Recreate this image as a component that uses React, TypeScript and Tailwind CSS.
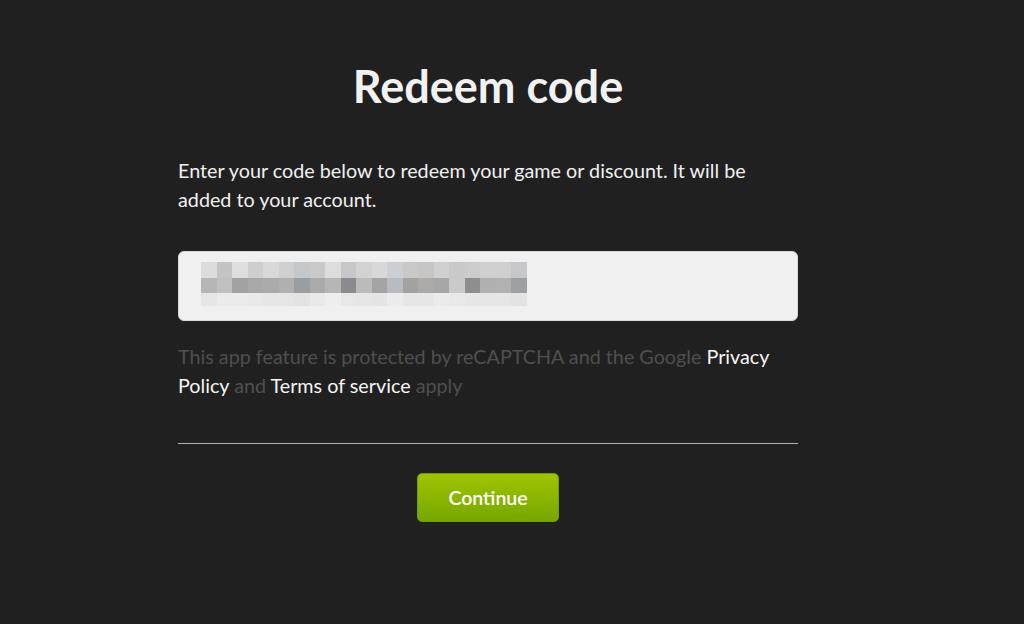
import React from "react"

// blurred-out code inside the input, as in the screenshot
const mosaic = [
  ["#dcdcdc", "#c4c4c4", "#dedede", "#cfcfcf", "#d9d9d9", "#d0d0d0", "#c5c8ca", "#cacaca", "#dddddd", "#c6c8c8", "#d2d2d2", "#d8d8d8", "#cdd0d3", "#c9c9c9", "#c8c6c4", "#d0d0d0", "#c9c9c9", "#cccccc", "#d0d0d0", "#d0d0d0", "#c5c7c9"],
  ["#b6b6b6", "#c0c0c0", "#a2a2a2", "#a6a8aa", "#ababab", "#b0b0b0", "#9a9ea3", "#aaaaaa", "#b8b6b4", "#8a8b8e", "#bbbbbb", "#a5a4a2", "#b8bcc0", "#a2a2a2", "#acaaa9", "#a5a7a8", "#cacaca", "#8e8e8e", "#b0b0b0", "#b3b2b0", "#9ea1a4"],
  ["#e6e6e6", "#ebebeb", "#ebebeb", "#e9e9e9", "#e6e6e6", "#e6e6e6", "#e3e3e3", "#e9e9e9", "#eeeeee", "#e7e7e7", "#e6e6e6", "#e5e5e5", "#ececec", "#e6e6e6", "#e6e6e6", "#ebebeb", "#e9e9e9", "#e6e6e6", "#e6e6e6", "#e6e6e6", "#e3e3e3"],
]

export default function App() {
  return (
    <div className="min-h-[624px] w-full bg-[#202020] font-['Lato','Open_Sans',sans-serif] flex justify-center pr-[48px]">
      <div className="w-[620px] pt-[58px] flex flex-col">
        <h1 className="text-center text-[45px] leading-[56px] font-bold text-[#f2f2f2]">Redeem code</h1>

        <p className="mt-[42px] text-[19.75px] leading-[29px] text-[#f0f0f0]">
          Enter your code below to redeem your game or discount. It will be added to your account.
        </p>

        <div className="mt-[37px] h-[70px] rounded-[6px] bg-[#f0f0f0] border border-[#d8d8d8] pl-[22px] pt-[10px]">
          <div className="flex flex-col">
            {mosaic.map((row, i) => (
              <div key={i} className={i === 2 ? "flex h-[13px]" : i === 0 ? "flex h-[16px]" : "flex h-[15px]"}>
                {row.map((c, j) => (
                  <div key={j} className="w-[15.5px] h-full" style={{ background: c }} />
                ))}
              </div>
            ))}
          </div>
        </div>

        <p className="mt-[21px] text-[19.75px] leading-[29px] text-[#4f4f4f]">
          This app feature is protected by reCAPTCHA and the Google{" "}
          <a className="text-[#f5f5f5]">Privacy Policy</a> and{" "}
          <a className="text-[#f5f5f5]">Terms of service</a> apply
        </p>

        <div className="mt-[43px] h-px bg-[#b0b0b0]" />

        <div className="mt-[29px] flex justify-center">
          <button className="w-[142px] h-[49px] rounded-[5px] border border-[#72a000] bg-gradient-to-b from-[#a0c400] to-[#76a700] text-white text-[19.5px] font-semibold">
            Continue
          </button>
        </div>
      </div>
    </div>
  )
}
